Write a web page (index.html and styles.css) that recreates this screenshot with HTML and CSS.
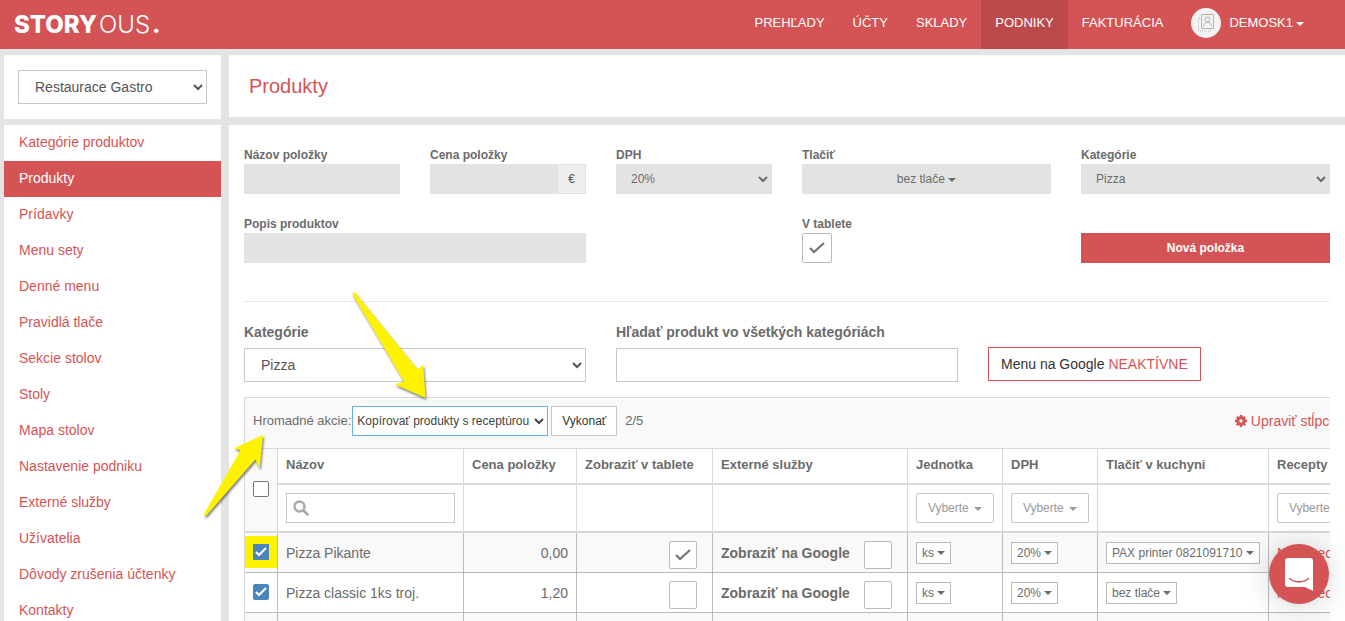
FILE: index.html
```html
<!DOCTYPE html>
<html lang="sk">
<head>
<meta charset="utf-8">
<title>Produkty</title>
<meta name="viewport" content="width=device-width, initial-scale=1">
<link rel="stylesheet" href="styles.css">
</head>
<body>
<header class="topbar">
  <a class="logo" href="#"><b>STORY</b><span>OUS</span><b>.</b></a>
  <nav class="topnav">
    <a href="#">PREHĽADY</a>
    <a href="#">ÚČTY</a>
    <a href="#">SKLADY</a>
    <a class="current" href="#">PODNIKY</a>
    <a href="#">FAKTURÁCIA</a>
    <a class="account" href="#">
      <span class="avatar">
        <svg width="16" height="18" viewBox="0 0 16 18" fill="none" stroke="#b4b4b4"><path d="M3.500 .5h12v14h-12z"/><path d="M2 4H.5v13h12v-2" stroke-dasharray="1 1"/><circle cx="9.500" cy="5.500" r="2.500"/><path d="M5.500 12.500c.4-3 2-4 4-4s3.600 1 4 4"/></svg>
      </span>
      DEMOSK1 <span class="caret"></span>
    </a>
  </nav>
</header>
<div class="layout">
  <aside class="sidebar">
    <div class="card venue">
      <select class="control" aria-label="Podnik"><option>Restaurace Gastro</option></select>
    </div>
    <nav class="card menu">
      <a href="#">Kategórie produktov</a>
      <a class="current" href="#">Produkty</a>
      <a href="#">Prídavky</a>
      <a href="#">Menu sety</a>
      <a href="#">Denné menu</a>
      <a href="#">Pravidlá tlače</a>
      <a href="#">Sekcie stolov</a>
      <a href="#">Stoly</a>
      <a href="#">Mapa stolov</a>
      <a href="#">Nastavenie podniku</a>
      <a href="#">Externé služby</a>
      <a href="#">Užívatelia</a>
      <a href="#">Dôvody zrušenia účtenky</a>
      <a href="#">Kontakty</a>
    </nav>
  </aside>
  <main class="main">
    <div class="card heading"><h1>Produkty</h1></div>
    <div class="card content">
      <form class="grid new-item">
        <div class="span2"><label for="name">Názov položky</label><input class="filled" id="name" type="text"></div>
        <div class="span2"><label for="price">Cena položky</label><div class="group"><input class="filled" id="price" type="text"><span class="addon">€</span></div></div>
        <div class="span2"><label for="vat">DPH</label><select class="filled" id="vat"><option>20%</option></select></div>
        <div class="span3"><label for="print">Tlačiť</label><button class="filled" id="print" type="button">bez tlače <span class="caret"></span></button></div>
        <div class="span3"><label for="cat">Kategórie</label><select class="filled" id="cat"><option>Pizza</option></select></div>
        <div class="span6 half"><label for="desc">Popis produktov</label><input class="filled" id="desc" type="text"></div>
        <div class="span3"><label for="tablet">V tablete</label><input class="box large" id="tablet" type="checkbox" checked></div>
        <div class="span3 bottom"><button class="primary" type="button">Nová položka</button></div>
      </form>
      <div class="grid search">
        <div class="span4"><label for="filter">Kategórie</label><select class="control" id="filter"><option>Pizza</option></select></div>
        <div class="span4"><label for="find">Hľadať produkt vo všetkých kategóriách</label><input class="control" id="find" type="text"></div>
        <div class="span4 google"><button class="outline" type="button">Menu na Google <span>NEAKTÍVNE</span></button></div>
      </div>
      <div class="scroller">
        <div class="sheet">
          <div class="toolbar">
            <label for="bulk">Hromadné akcie:</label>
            <select id="bulk"><option>Kopírovať produkty s receptúrou</option></select>
            <button class="run" type="button">Vykonať</button>
            <span class="count">2/5</span>
            <a class="columns" href="#"><svg width="12" height="12" viewBox="0 0 12 12"><path fill="none" stroke="currentColor" stroke-width="3" d="M6 2.800a3.200 3.200 0 1 1 0 6.400a3.200 3.200 0 1 1 0-6.400"/><path stroke="currentColor" stroke-width="2.400" d="M6 0v2.500M6 9.500V12M0 6h2.500M9.500 6H12M1.800 1.800l1.600 1.600M8.600 8.600l1.600 1.600M10.200 1.800 8.600 3.400M3.400 8.600l-1.600 1.600"/></svg> Upraviť stĺpce</a>
          </div>
          <table>
            <colgroup><col class="c-check"><col class="c-name"><col class="c-price"><col class="c-tablet"><col class="c-ext"><col class="c-unit"><col class="c-unit"><col class="c-print"><col class="c-recipe"></colgroup>
            <thead>
              <tr class="titles">
                <th class="check all" rowspan="2"><input class="tick" type="checkbox" aria-label="Všetky"></th>
                <th>Názov</th><th>Cena položky</th><th>Zobraziť v tablete</th><th>Externé služby</th><th>Jednotka</th><th>DPH</th><th>Tlačiť v kuchyni</th><th>Recepty</th>
              </tr>
              <tr class="filters">
                <td><div class="lookup"><svg width="16" height="16" viewBox="0 0 16 16" fill="none" stroke="#aaa"><circle cx="6.500" cy="6.500" r="5" stroke-width="2.400"/><path d="m10.500 10.500 4 4" stroke-width="2.800" stroke-linecap="round"/></svg><input type="text" aria-label="Názov"></div></td>
                <td></td><td></td><td></td>
                <td><button class="choose" type="button">Vyberte <span class="caret"></span></button></td>
                <td><button class="choose" type="button">Vyberte <span class="caret"></span></button></td>
                <td></td>
                <td><button class="choose" type="button">Vyberte <span class="caret"></span></button></td>
              </tr>
            </thead>
            <tbody>
              <tr>
                <td class="check"><input class="tick marked" type="checkbox" aria-label="Pizza Pikante" checked></td>
                <td>Pizza Pikante</td>
                <td class="num">0,00</td>
                <td class="boxed"><input class="box" type="checkbox" aria-label="Zobraziť v tablete" checked></td>
                <td class="boxed"><label><b>Zobraziť na Google</b><input class="box" type="checkbox"></label></td>
                <td><button class="mini" type="button">ks <span class="caret"></span></button></td>
                <td><button class="mini" type="button">20% <span class="caret"></span></button></td>
                <td><button class="mini" type="button">PAX printer 0821091710 <span class="caret"></span></button></td>
                <td><a href="#">Nový recept</a></td>
              </tr>
              <tr>
                <td class="check"><input class="tick" type="checkbox" aria-label="Pizza classic 1ks troj." checked></td>
                <td>Pizza classic 1ks troj.</td>
                <td class="num">1,20</td>
                <td class="boxed"><input class="box" type="checkbox" aria-label="Zobraziť v tablete"></td>
                <td class="boxed"><label><b>Zobraziť na Google</b><input class="box" type="checkbox"></label></td>
                <td><button class="mini" type="button">ks <span class="caret"></span></button></td>
                <td><button class="mini" type="button">20% <span class="caret"></span></button></td>
                <td><button class="mini" type="button">bez tlače <span class="caret"></span></button></td>
                <td><a href="#">Nový recept</a></td>
              </tr>
              <tr><td></td><td></td><td></td><td></td><td></td><td></td><td></td><td></td><td></td></tr>
            </tbody>
          </table>
        </div>
      </div>
      <!-- Callout arrows over the bulk actions -->
      <svg class="arrow arrow-down" width="80" height="112" viewBox="0 0 80 112"><path d="M2.300 4Q3 2 5 2.500L67.700 79.500L73.300 74.500L75.500 108L45 94.500L54 91.500Z"/></svg>
      <svg class="arrow arrow-up" width="66" height="90" viewBox="0 0 66 90"><path d="M61 4L57.700 37.500L53.300 28.500L4.500 84.500Q2 85.500 2 83L38.700 19L31.500 17.500Z"/></svg>
    </div>
  </main>
</div>
<button class="chat" type="button" aria-label="Chat">
  <svg width="28" height="33" viewBox="0 0 28 33"><path fill="#fff" d="M3 0h22a3 3 0 0 1 3 3v30l-8-4H3a3 3 0 0 1-3-3V3a3 3 0 0 1 3-3z"/><path fill="none" stroke="#d45455" stroke-width="1.600" stroke-linecap="round" d="M4.500 20.500c5.500 4.500 13.500 4.500 19 0"/></svg>
</button>
</body>
</html>
```
FILE: styles.css
```css
* { box-sizing: border-box; }
body {
  margin: 0;
  height: 100vh;
  overflow: hidden;
  background: #e4e4e4;
  color: #6b6b6b;
  font: 14px/20px "Liberation Sans", Arial, sans-serif;
}
a { color: #d45455; text-decoration: none; }
input, select, button { font: inherit; color: inherit; margin: 0; border-radius: 0; }
button { cursor: pointer; }
.card { background: #fff; }
.caret {
  display: inline-block;
  border: 4px solid transparent;
  border-top-color: currentColor;
  border-bottom: 0;
  vertical-align: middle;
}

/* Top bar */
.topbar {
  display: flex;
  justify-content: space-between;
  height: 49px;
  padding: 0 27px 0 14px;
  background: #d45455;
}
.topbar a { color: #fff; }
.logo { display: flex; gap: 2px; font: 300 24px/49px Inter, "Open Sans", sans-serif; }
.logo b { font-weight: 800; }
.topnav { display: flex; font-size: 13px; line-height: 46px; }
.topnav > a { padding: 0 14px; }
.topnav .current { background: #bd4a4b; }
.topnav .account { display: flex; align-items: center; line-height: 20px; padding-bottom: 4px; }
.account .caret { margin: 3px 0 0 3px; }
.avatar {
  display: flex;
  align-items: center;
  justify-content: center;
  width: 30px;
  height: 30px;
  margin-right: 8px;
  border-radius: 50%;
  background: #f3f3f3;
}

/* Page columns */
.layout { display: grid; grid-template-columns: 217px minmax(0, 1fr); gap: 8px; padding: 6px 0 0 4px; }
.sidebar { display: flex; flex-direction: column; gap: 6px; }
.venue { padding: 15px 14px; }
.menu { display: flex; flex-direction: column; }
.menu a { padding: 7px 15px 9px; }
.menu .current { background: #d45455; color: #fff; }
.main { display: flex; flex-direction: column; gap: 8px; }
.heading { padding: 18px 20px 17px; }
.heading h1 { margin: 0; font-size: 20px; font-weight: 400; line-height: 27px; color: #d45455; }
.content { position: relative; padding: 21px 15px 0; }

/* Forms */
.grid { display: grid; grid-template-columns: repeat(12, minmax(0, 1fr)); column-gap: 30px; row-gap: 21px; }
.span2 { grid-column: span 2; }
.span3 { grid-column: span 3; }
.span4 { grid-column: span 4; }
.span6 { grid-column: span 6; }
.half { padding-right: 186px; }
.bottom { align-self: end; }
.grid label { display: block; font-weight: 700; }
.new-item { font-size: 12px; line-height: 18px; padding-bottom: 38px; border-bottom: 1px solid #eaeaea; }
.filled { display: block; width: 100%; height: 30px; padding: 0 10px; border: 1px solid #e3e3e3; background: #e3e3e3; }
.group { display: flex; border: 1px solid #e3e3e3; }
.group .filled { height: 28px; min-width: 0; }
.addon { flex: none; width: 27px; line-height: 28px; text-align: center; background: #eee; color: #555; }
.primary { display: block; width: 100%; height: 30px; border: 0; background: #d45455; color: #fff; font-weight: 700; }
.control { display: block; width: 100%; height: 34px; padding: 0 12px; border: 1px solid #c8c8c8; background: #fff; color: #555; }
.search { padding-top: 20px; }
.search label { margin-bottom: 6px; }
.google { padding-top: 25px; }
.outline { height: 34px; padding: 0 12px; border: 1px solid #d45455; background: #fff; color: #333; }
.outline span { color: #d45455; }

/* Check boxes */
.box {
  display: block;
  appearance: none;
  width: 28px;
  height: 28px;
  flex: none;
  border: 1px solid #bbb;
  border-radius: 2px;
  background: #fff center no-repeat;
}
.large { width: 30px; height: 30px; }
.box:checked { background-image: url("data:image/svg+xml,%3Csvg xmlns='http://www.w3.org/2000/svg' width='16' height='12'%3E%3Cpath d='M1 6l4 4L15 1' fill='none' stroke='%23707070' stroke-width='2'/%3E%3C/svg%3E"); }
.tick {
  display: block;
  appearance: none;
  width: 16px;
  height: 16px;
  border: 1px solid #767676;
  border-radius: 2px;
  background: #fff center no-repeat;
}
.tick:checked {
  border-color: #4b85bc;
  background-color: #4b85bc;
  background-image: url("data:image/svg+xml,%3Csvg xmlns='http://www.w3.org/2000/svg' width='12' height='10'%3E%3Cpath d='M1 5l3 3L11 1' fill='none' stroke='%23fff' stroke-width='2'/%3E%3C/svg%3E");
}
.marked { border-radius: 0; outline: 8px solid #fff200; outline-offset: 0; }

/* Product table */
.scroller { overflow: hidden; padding-top: 15px; }
.sheet { width: 1106px; border: 1px solid #d9d9d9; border-width: 1px 0 0 1px; }
.toolbar { display: flex; align-items: center; padding: 8px 13px 12px 8px; background: #f9f9f9; border-bottom: 1px solid #d9d9d9; }
.toolbar label, .count { font-size: 13px; }
.toolbar select, .run { height: 30px; font-size: 12px; background: #fff; }
.toolbar select { width: 196px; margin: 0 3px 0 1px; padding: 0; border: 1px solid #66afe9; color: #444; }
.run { width: 66px; padding: 0; border: 1px solid #c8c8c8; color: #333; }
.count { margin-left: 8px; }
.columns { display: flex; align-items: center; gap: 4px; margin-left: auto; }
table { width: 100%; table-layout: fixed; border-spacing: 0; }
.c-check { width: 33px; }
.c-name { width: 186px; }
.c-price { width: 113px; }
.c-tablet { width: 136px; }
.c-ext { width: 195px; }
.c-unit { width: 95px; }
.c-print { width: 171px; }
th, td { padding: 0 8px; border-right: 1px solid #d9d9d9; text-align: left; white-space: nowrap; }
thead th, thead td { border-bottom: 2px solid #d9d9d9; }
.titles th { height: 36px; padding-bottom: 2px; font-size: 13px; }
.filters td { height: 48px; }
.check { background: #f9f9f9; }
.lookup { display: flex; align-items: center; height: 30px; padding: 0 6px; border: 1px solid #c8c8c8; background: #fff; }
.lookup input { flex: 1; min-width: 0; border: 0; padding: 0 6px; background: none; }
.choose { height: 30px; width: 78px; padding: 0; border: 1px solid #c8c8c8; border-radius: 2px; background: #fff; color: #999; font-size: 12px; }
.choose .caret { margin-left: 2px; }
tbody td { height: 40px; border-color: #bbb; border-bottom: 1px solid #bbb; }
tbody tr:nth-child(odd) td { background: #f9f9f9; }
tbody .check { background: none; padding-bottom: 1px; }
.num { text-align: right; }
tbody .boxed { padding: 8px 15px 3px 8px; vertical-align: top; }
.boxed > .box { margin-left: auto; }
.boxed label { display: flex; justify-content: space-between; }
.boxed b { line-height: 24px; }
.mini { display: block; height: 22px; padding: 0 5px; border: 1px solid #bbb; background: #fff; font-size: 12px; line-height: 20px; }

/* Overlays */
.arrow { position: absolute; fill: #fff200; filter: drop-shadow(1px 2px 1px rgba(0, 0, 0, .5)); }
.arrow-down { left: 121px; top: 165px; }
.arrow-up { left: -27px; top: 306px; }
.chat {
  position: fixed;
  right: 16px;
  bottom: 17px;
  display: flex;
  align-items: center;
  justify-content: center;
  width: 60px;
  height: 60px;
  padding: 0;
  border: 0;
  border-radius: 50%;
  background: #d45455;
  box-shadow: 0 1px 6px rgba(0, 0, 0, .06), 0 2px 32px rgba(0, 0, 0, .16);
}
```
